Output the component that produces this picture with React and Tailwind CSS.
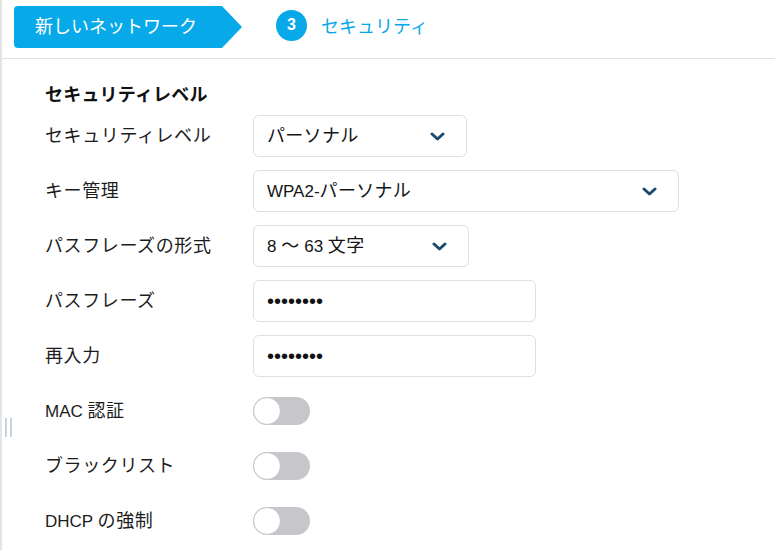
import React from "react";

const font = { fontFamily: '"Liberation Sans", "Noto Sans CJK JP", sans-serif' };

const L = ({ children }) => <span className="text-[17px] tracking-normal">{children}</span>;

const Chevron = () => (
  <svg width="15" height="9" viewBox="0 0 15 9">
    <path
      d="M2 2l5.5 5 5.5-5"
      fill="none"
      stroke="#1c4b6d"
      strokeWidth="3"
      strokeLinecap="round"
      strokeLinejoin="round"
    />
  </svg>
);

const Select = ({ width, children }) => (
  <div
    className={`flex h-[42px] items-center justify-between rounded-md border border-[#dfdfdf] bg-white pl-[13px] pr-[21px] text-[18px] tracking-[0.3px] text-[#151515] ${width}`}
  >
    <span>{children}</span>
    <Chevron />
  </div>
);

const Password = () => (
  <div className="flex h-[42px] w-[283px] items-center rounded-md border border-[#dfdfdf] bg-white pl-[13px] text-[20px] leading-none text-[#111]">
    ••••••••
  </div>
);

const Toggle = () => (
  <div className="flex h-[28px] w-[57px] items-center rounded-full bg-[#c7c7cb]">
    <div className="h-[28px] w-[28px] rounded-full border border-[#c4c4c8] bg-white" />
  </div>
);

const Row = ({ label, children }) => (
  <div className="flex h-[42px] items-center">
    <div className="w-[208px] text-[18px] tracking-[0.6px] text-[#1c1c1c]">{label}</div>
    {children}
  </div>
);

export default function App() {
  return (
    <div
      style={font}
      className="relative h-[550px] w-[775px] overflow-hidden border-l-2 border-[#e4e4e4] bg-white"
    >
      <div className="flex h-[59px] items-start border-b border-[#e2e2e2] pl-3 pt-[6px]">
        <div className="flex">
          <div className="flex h-[42px] w-[208px] items-center rounded-l-[4px] bg-[#08a9e8] pl-[21px] text-[18px] text-white">
            新しいネットワーク
          </div>
          <svg width="20" height="42" viewBox="0 0 20 42">
            <polygon points="0,0 20,21 0,42" fill="#08a9e8" />
          </svg>
        </div>
        <div className="ml-[34px] flex h-[42px] items-center">
          <div className="mb-[4px] flex h-[31px] w-[31px] items-center justify-center rounded-full bg-[#08a9e8] text-[16px] font-bold text-white">
            3
          </div>
          <span className="ml-[14px] text-[18px] text-[#08a9e8]">セキュリティ</span>
        </div>
      </div>

      <div className="pl-[43px] pt-[23px]">
        <div className="h-[26px] text-[18px] font-bold leading-[26px] tracking-[0.2px] text-[#111]">
          セキュリティレベル
        </div>
        <div className="mt-[7px] flex flex-col gap-[13px]">
          <Row label="セキュリティレベル">
            <Select width="w-[214px]">パーソナル</Select>
          </Row>
          <Row label="キー管理">
            <Select width="w-[426px]">
              <L>WPA2-</L>パーソナル
            </Select>
          </Row>
          <Row label="パスフレーズの形式">
            <Select width="w-[216px]">
              <L>8 </L>～<L> 63 </L>文字
            </Select>
          </Row>
          <Row label="パスフレーズ">
            <Password />
          </Row>
          <Row label="再入力">
            <Password />
          </Row>
          <Row
            label={
              <>
                <L>MAC </L>認証
              </>
            }
          >
            <Toggle />
          </Row>
          <Row label="ブラックリスト">
            <Toggle />
          </Row>
          <Row
            label={
              <>
                <L>DHCP </L>の強制
              </>
            }
          >
            <Toggle />
          </Row>
        </div>
      </div>

      <div className="absolute left-[3px] top-[418px] flex gap-[3px]">
        <div className="h-[19px] w-[2px] bg-[#c9d3dc]" />
        <div className="h-[19px] w-[2px] bg-[#c9d3dc]" />
      </div>
    </div>
  );
}
